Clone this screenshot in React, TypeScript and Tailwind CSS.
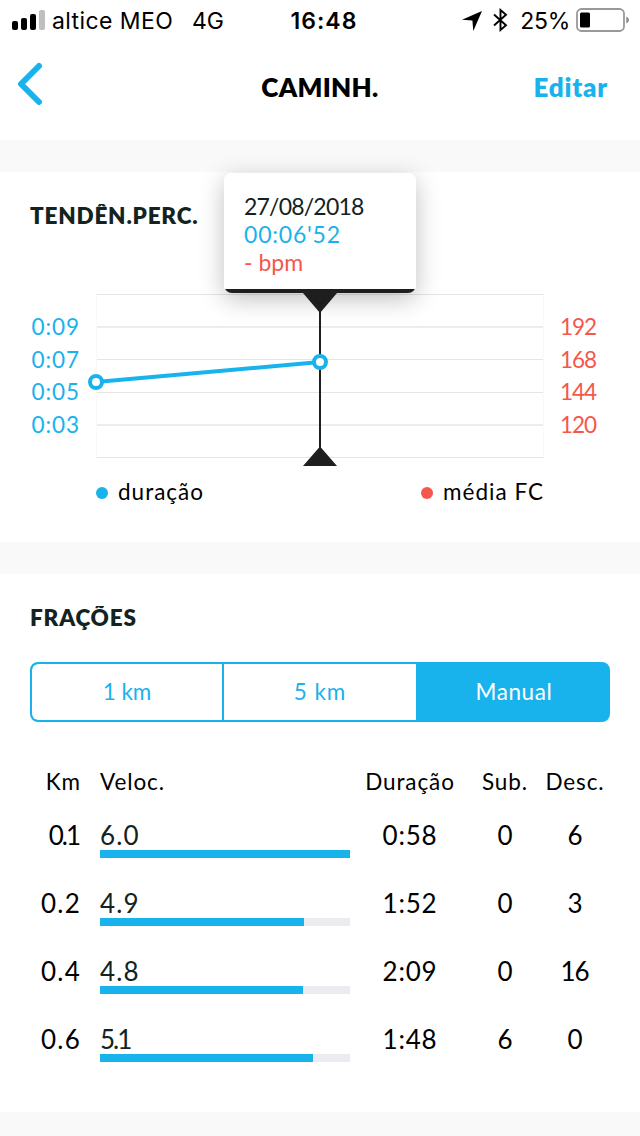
import React from "react";

interface Split {
	km: string;
	speed: string;
	fill: number;
	duration: string;
	up: string;
	down: string;
}

const splits: Split[] = [
	{ km: "0.1", speed: "6.0", fill: 250, duration: "0:58", up: "0", down: "6" },
	{ km: "0.2", speed: "4.9", fill: 204, duration: "1:52", up: "0", down: "3" },
	{ km: "0.4", speed: "4.8", fill: 203, duration: "2:09", up: "0", down: "16" },
	{ km: "0.6", speed: "5.1", fill: 213, duration: "1:48", up: "6", down: "0" },
];

// The digit 1 sits tighter than the others
const tracking = (value: string) => (value.endsWith(".1") ? "tracking-[-2px]" : "tracking-[1.2px]");

const StatusBar: React.FC = () => (
	<div className="relative flex h-10 items-center justify-between pt-[2px] pr-[10px] pl-3 font-['Inter',sans-serif] text-[23px] leading-[38px] text-black">
		<div className="flex items-center">
			<svg width="34" height="20" className="mr-[6px] -mt-[2px]">
				<rect x="0" y="11" width="6" height="9" rx="2" />
				<rect x="9" y="8" width="6" height="12" rx="2" />
				<rect x="18" y="4" width="6" height="16" rx="2" />
				<rect x="27" y="0" width="6" height="20" rx="2" fill="#bfbfbf" />
			</svg>
			<span className="w-[140px] whitespace-nowrap tracking-[0.4px]">altice MEO</span>
			<span>4G</span>
		</div>
		<span className="absolute inset-x-0 pl-[8px] text-center font-semibold tracking-[1px]">16:48</span>
		<div className="flex items-center">
			<svg width="20" height="20" viewBox="0 0 20 20" className="mr-[11px]">
				<path d="M0 8.8 20 0 11.3 20 10.4 9.6Z" />
			</svg>
			<svg width="15" height="24" viewBox="0 0 15 24" className="mr-[12px] -mt-[2px]" fill="none" stroke="#000" strokeWidth="1.9">
				<path d="M1 6.5 13 17.3 7.5 22V2L13 6.7 1 17.5" />
			</svg>
			<span className="mr-[6px] tracking-[-0.3px]">25%</span>
			<svg width="54" height="24" className="-mt-[2px]">
				<rect x="1" y="1" width="47" height="22" rx="4.5" fill="none" stroke="#999" strokeWidth="1.8" />
				<rect x="4" y="4.5" width="10" height="15" rx="1.5" />
				<path d="M50.3 8.5Q53 9.5 53 12T50.3 15.5Z" fill="#888" />
			</svg>
		</div>
	</div>
);

const Header: React.FC = () => (
	<div className="relative flex h-[100px] items-center justify-between pr-[32px] pb-[6px] pl-[17px] text-[26px] font-bold">
		<svg width="26" height="44" viewBox="0 0 26 44" className="-mt-[6px]" fill="none" stroke="#18b3ec" strokeWidth="6" strokeLinecap="round" strokeLinejoin="round">
			<path d="M22 4 4 22 22 40" />
		</svg>
		<h1 className="absolute inset-x-0 pt-px text-center font-extrabold tracking-[0.3px] text-black">CAMINH.</h1>
		<button className="pt-px font-extrabold tracking-[0.8px] text-[#18b3ec]">Editar</button>
	</div>
);

// The top of the capitals' accents is masked off
const SectionTitle: React.FC<{ children: string }> = ({ children }) => (
	<h2 className="relative -mt-[2px] h-[30px] text-[22.5px] leading-[27px] font-extrabold tracking-[0.8px] text-[#132321] before:absolute before:inset-x-0 before:-top-2 before:h-[10px] before:bg-white">
		{children}
	</h2>
);

const TrendChart: React.FC = () => (
	<div className="flex h-[164px] justify-between pr-[44px] pl-[30px] text-[22.5px]">
		<div className="flex w-[50px] flex-col pt-[17px] text-right leading-[32.7px] tracking-[0.9px] text-[#18b3ec]">
			<span>0:09</span>
			<span>0:07</span>
			<span>0:05</span>
			<span>0:03</span>
		</div>
		<div className="relative w-[448px]">
			<svg width="448" height="174" className="overflow-visible">
				<g fill="#e5e5e9">
					<rect y="0" width="448" height="1" />
					<rect y="32" width="448" height="2" fill="#ededf1" />
					<rect y="65" width="448" height="1" />
					<rect y="98" width="448" height="1" />
					<rect y="130" width="448" height="2" fill="#ededf1" />
					<rect y="163" width="448" height="1" />
					<rect width="1" height="164" fill="#f9f9fb" />
					<rect x="447" width="1" height="164" fill="#f9f9fb" />
				</g>
				<path d="M224 0V166" stroke="#1e1e1e" strokeWidth="2" />
				<path d="M207 172 224 152.5 241 172Z" fill="#1e1e1e" />
				<path d="M0 88 224 68" stroke="#18b3ec" strokeWidth="4" />
				<g fill="#fff" stroke="#18b3ec" strokeWidth="4">
					<circle cx="0" cy="88" r="6" />
					<circle cx="224" cy="68" r="6" />
				</g>
			</svg>
			{/* Selected workout */}
			<div className="absolute -top-[121px] left-32 h-[120px] w-48 rounded-lg bg-linear-to-b from-white from-[116px] to-[#1e1e1e] to-[116px] pt-[19px] pl-5 text-[23px] leading-7 shadow-[0_6px_24px_rgba(0,0,0,0.25)]">
				<p className="tracking-[-0.8px] text-[#132321]">27/08/2018</p>
				<p className="tracking-[0.8px] text-[#18b3ec]">00:06'52</p>
				<p className="text-[#f4574b]">- bpm</p>
				<svg width="34" height="20" className="absolute top-[120px] left-[79px]">
					<path d="M0 0H34L17 20Z" fill="#1e1e1e" />
				</svg>
			</div>
		</div>
		<div className="flex w-9 flex-col pt-[17px] leading-[32.7px] tracking-[-1px] text-[#f4574b]">
			<span>192</span>
			<span>168</span>
			<span>144</span>
			<span>120</span>
		</div>
	</div>
);

const SplitRow: React.FC<Split> = ({ km, speed, fill, duration, up, down }) => (
	<div className="grid h-[68px] grid-cols-[50px_20px_250px_120px_70px_70px] text-center text-[26px] leading-8 text-black">
		<span className={`-mr-px pt-px text-right ${km.endsWith(".1") ? "pr-[2px]" : ""} ${tracking(km)}`}>{km}</span>
		<div className="col-start-3 text-left text-[#132321]">
			<p className={`h-8 pt-px ${tracking(speed)}`}>{speed}</p>
			<div className="h-2 bg-[#ebebf0]">
				<div className="h-2 bg-[#18b3ec]" style={{ width: fill }} />
			</div>
		</div>
		<span className="pt-px tracking-[0.8px]">{duration}</span>
		<span className="pt-px">{up}</span>
		<span className="pt-px pr-px tracking-[-1px]">{down}</span>
	</div>
);

const App: React.FC = () => {
	return (
		<div className="h-[1136px] w-[640px] overflow-hidden bg-[#f9f9f9] font-['Lato',sans-serif]">
			<div className="bg-white">
				<StatusBar />
				<Header />
			</div>

			<section className="mt-8 h-[370px] bg-white pt-8">
				<div className="mb-[62px] pl-[30px]">
					<SectionTitle>TENDÊN.PERC.</SectionTitle>
				</div>
				<TrendChart />
				<div className="mx-24 mt-[20px] flex justify-between text-[22.5px] leading-7 tracking-[1px] text-black">
					<span className="flex items-center">
						<i className="mt-[2px] mr-[10px] size-3 rounded-full bg-[#18b3ec]" />
						duração
					</span>
					<span className="flex items-center">
						<i className="mt-[2px] mr-[10px] size-3 rounded-full bg-[#f4574b]" />
						média FC
					</span>
				</div>
			</section>

			<section className="mt-8 h-[538px] bg-white px-[30px] pt-8">
				<SectionTitle>FRAÇÕES</SectionTitle>
				<div className="mt-7 flex h-[60px] overflow-hidden rounded-lg border-2 border-[#18b3ec] bg-[#18b3ec] text-[22.5px] text-[#18b3ec]">
					<button className="w-[192px] rounded-l-md border-r-2 border-[#18b3ec] bg-white">1 km</button>
					<button className="w-[192px] bg-white tracking-[1px]">5 km</button>
					<button className="flex-1 pl-1 tracking-[0.6px] text-white">Manual</button>
				</div>
				<div className="mt-[46px] mb-[22px] grid grid-cols-[50px_20px_250px_120px_70px_70px] text-center text-[22.5px] leading-7 tracking-[0.9px] text-black">
					<span className="-mr-px text-right">Km</span>
					<span className="col-start-3 text-left">Veloc.</span>
					<span>Duração</span>
					<span>Sub.</span>
					<span>Desc.</span>
				</div>
				{splits.map((s) => (
					<SplitRow key={s.km} {...s} />
				))}
			</section>
		</div>
	);
};

export default App;
